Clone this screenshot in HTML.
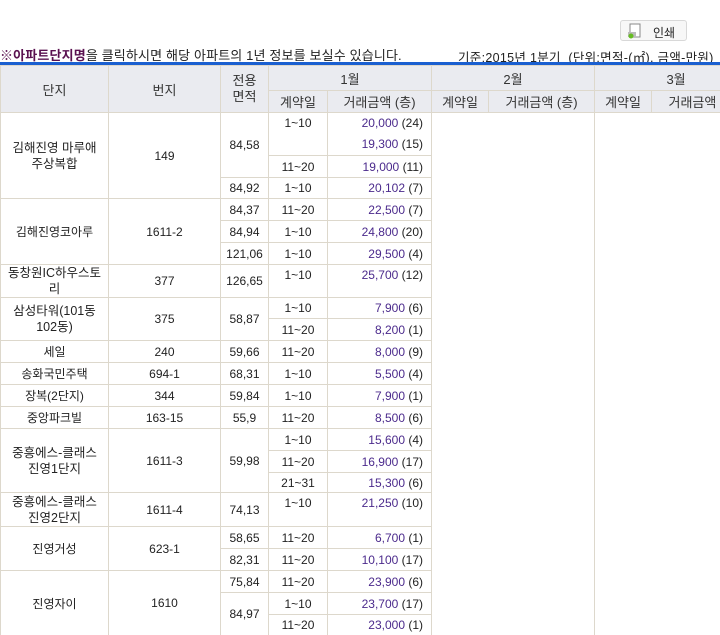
<!DOCTYPE html>
<html><head><meta charset="utf-8"><style>
body{margin:0;width:720px;height:635px;overflow:hidden;background:#fff;font-family:"Liberation Sans","Noto Sans CJK KR",sans-serif;font-size:12px;color:#222;position:relative}
.btn{position:absolute;left:620px;top:20px;width:67px;height:21px;border:1px solid #d8d8d8;border-radius:3px;background:#f7f7f7;box-sizing:border-box}
.btn span{position:absolute;left:32px;top:3px;font-size:12px}
.info{position:absolute;top:45px;left:0;font-size:13px;white-space:nowrap;letter-spacing:0.15px}
.info b{color:#5a1150}
.std{position:absolute;top:47px;left:458px;font-size:12.5px;white-space:nowrap;letter-spacing:0.3px}
.bar{position:absolute;top:62px;left:0;width:720px;height:3px;background:#1a5fd0}
.wrap{position:absolute;top:65px;left:0;width:720px;height:570px;overflow:hidden}
table{border-collapse:collapse;table-layout:fixed;width:757px}
td,th{border:1px solid #ddd8cc;padding:0;text-align:center;font-weight:normal;white-space:nowrap;overflow:hidden}
th{background:#eaebf0;color:#333;font-size:13px}
.p{text-align:right;padding-right:8px;color:#4b2a8c}
.p i{font-style:normal;color:#222}
.w{white-space:normal;line-height:16px;padding:0 6px;font-size:12.5px}
.t{vertical-align:top;padding-top:3px}
</style></head><body>
<div class="btn"><svg width="16" height="16" style="position:absolute;left:6px;top:2px"><rect x="3" y="1" width="10" height="13" fill="#fff" stroke="#888"/><rect x="1" y="9" width="8" height="5" fill="#bbb"/><circle cx="4" cy="13" r="2.5" fill="#6b2"/></svg><span>인쇄</span></div>
<div class="info"><b>※아파트단지명</b>을 클릭하시면 해당 아파트의 1년 정보를 보실수 있습니다.</div>
<div class="std">기준:2015년 1분기 &nbsp;(단위:면적-(㎡), 금액-만원)</div>
<div class="bar"></div>
<div class="wrap"><table>
<colgroup><col style="width:108px"><col style="width:112px"><col style="width:48px"><col style="width:59px"><col style="width:104px"><col style="width:57px"><col style="width:106px"><col style="width:57px"><col style="width:106px"></colgroup>
<tr style="height:25px"><th rowspan="2">단지</th><th rowspan="2">번지</th><th rowspan="2" style="line-height:16px">전용<br>면적</th><th colspan="2">1월</th><th colspan="2">2월</th><th colspan="2">3월</th></tr>
<tr style="height:22px"><th>계약일</th><th>거래금액 (층)</th><th>계약일</th><th>거래금액 (층)</th><th>계약일</th><th>거래금액 (층)</th></tr>
<tr style="height:22px"><td rowspan="4" class="w">김해진영 마루애 주상복합</td><td rowspan="4">149</td><td rowspan="3">84,58</td><td rowspan="2" class="t">1~10</td><td rowspan="2" class="p" style="line-height:21px">20,000 <i>(24)</i><br>19,300 <i>(15)</i></td><td rowspan="23" colspan="2"></td><td rowspan="23" colspan="2"></td></tr>
<tr style="height:21px"></tr>
<tr style="height:22px"><td>11~20</td><td class="p">19,000 <i>(11)</i></td></tr>
<tr style="height:21px"><td>84,92</td><td>1~10</td><td class="p">20,102 <i>(7)</i></td></tr>
<tr style="height:22px"><td rowspan="3">김해진영코아루</td><td rowspan="3">1611-2</td><td>84,37</td><td>11~20</td><td class="p">22,500 <i>(7)</i></td></tr>
<tr style="height:22px"><td>84,94</td><td>1~10</td><td class="p">24,800 <i>(20)</i></td></tr>
<tr style="height:22px"><td>121,06</td><td>1~10</td><td class="p">29,500 <i>(4)</i></td></tr>
<tr style="height:33px"><td class="w">동창원IC하우스토리</td><td>377</td><td>126,65</td><td class="t">1~10</td><td class="p t">25,700 <i>(12)</i></td></tr>
<tr style="height:21px"><td rowspan="2" class="w">삼성타워(101동102동)</td><td rowspan="2">375</td><td rowspan="2">58,87</td><td>1~10</td><td class="p">7,900 <i>(6)</i></td></tr>
<tr style="height:22px"><td>11~20</td><td class="p">8,200 <i>(1)</i></td></tr>
<tr style="height:22px"><td>세일</td><td>240</td><td>59,66</td><td>11~20</td><td class="p">8,000 <i>(9)</i></td></tr>
<tr style="height:22px"><td>송화국민주택</td><td>694-1</td><td>68,31</td><td>1~10</td><td class="p">5,500 <i>(4)</i></td></tr>
<tr style="height:22px"><td>장복(2단지)</td><td>344</td><td>59,84</td><td>1~10</td><td class="p">7,900 <i>(1)</i></td></tr>
<tr style="height:22px"><td>중앙파크빌</td><td>163-15</td><td>55,9</td><td>11~20</td><td class="p">8,500 <i>(6)</i></td></tr>
<tr style="height:22px"><td rowspan="3" class="w">중흥에스-클래스진영1단지</td><td rowspan="3">1611-3</td><td rowspan="3">59,98</td><td>1~10</td><td class="p">15,600 <i>(4)</i></td></tr>
<tr style="height:22px"><td>11~20</td><td class="p">16,900 <i>(17)</i></td></tr>
<tr style="height:20px"><td>21~31</td><td class="p">15,300 <i>(6)</i></td></tr>
<tr style="height:34px"><td class="w">중흥에스-클래스진영2단지</td><td>1611-4</td><td>74,13</td><td class="t">1~10</td><td class="p t">21,250 <i>(10)</i></td></tr>
<tr style="height:22px"><td rowspan="2">진영거성</td><td rowspan="2">623-1</td><td>58,65</td><td>11~20</td><td class="p">6,700 <i>(1)</i></td></tr>
<tr style="height:22px"><td>82,31</td><td>11~20</td><td class="p">10,100 <i>(17)</i></td></tr>
<tr style="height:22px"><td rowspan="3">진영자이</td><td rowspan="3">1610</td><td>75,84</td><td>11~20</td><td class="p">23,900 <i>(6)</i></td></tr>
<tr style="height:22px"><td rowspan="2">84,97</td><td>1~10</td><td class="p">23,700 <i>(17)</i></td></tr>
<tr style="height:21px"><td>11~20</td><td class="p">23,000 <i>(1)</i></td></tr>
</table></div>
</body></html>
